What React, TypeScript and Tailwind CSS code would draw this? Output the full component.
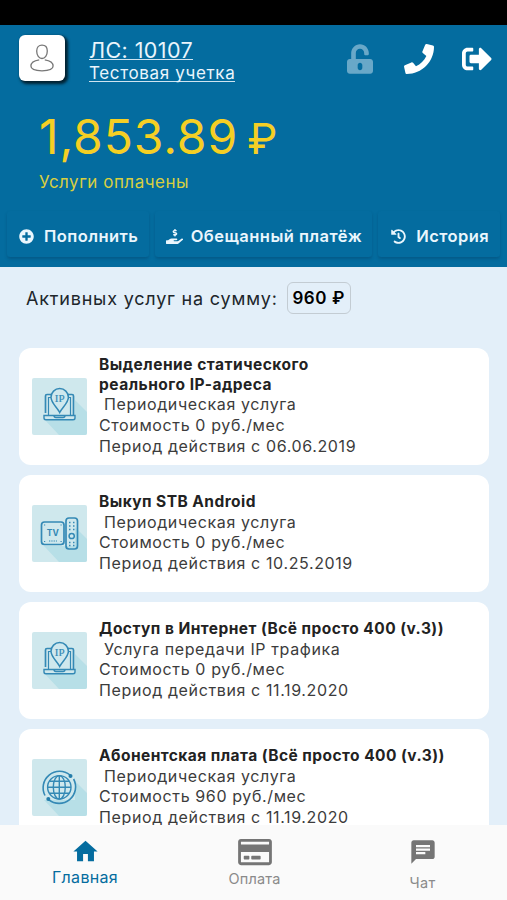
import { FaUnlockAlt, FaPhone, FaSignOutAlt, FaPlusCircle, FaHandHoldingUsd, FaHistory, FaRegCreditCard } from "react-icons/fa";
import { MdHome, MdChat } from "react-icons/md";

const services = [
  {
    icon: "ip",
    title: "Выделение статического реального IP-адреса",
    type: "Периодическая услуга",
    price: "Стоимость 0 руб./мес",
    period: "Период действия с 06.06.2019",
  },
  {
    icon: "tv",
    title: "Выкуп STB Android",
    type: "Периодическая услуга",
    price: "Стоимость 0 руб./мес",
    period: "Период действия с 10.25.2019",
  },
  {
    icon: "ip",
    title: "Доступ в Интернет (Всё просто 400 (v.3))",
    type: "Услуга передачи IP трафика",
    price: "Стоимость 0 руб./мес",
    period: "Период действия с 11.19.2020",
  },
  {
    icon: "globe",
    title: "Абонентская плата (Всё просто 400 (v.3))",
    type: "Периодическая услуга",
    price: "Стоимость 960 руб./мес",
    period: "Период действия с 11.19.2020",
  },
];

function UserIcon() {
  return (
    <svg width="24" height="28" viewBox="0 0 24 28" fill="none" stroke="#777" strokeWidth="1.3">
      <path d="M12 1.200c3.200 0 5.300 2.200 5.300 5.800 0 4.200-2.300 7.500-5.300 7.500s-5.300-3.300-5.300-7.500c0-3.600 2.100-5.800 5.300-5.800Z" />
      <path d="M9.200 15.800C4 16.500 .900 18.600 .900 22.100c0 3 4.400 4.700 11.100 4.700s11.100-1.700 11.100-4.700c0-3.500-3.100-5.600-8.300-6.300" />
    </svg>
  );
}

function IpArt() {
  return (
    <g>
      <path d="M13.500 35V18q0-1.500 1.500-1.500h4.500M36 16.500h4q1.500 0 1.500 1.500V37" strokeWidth="1.700" />
      <path d="M16.500 37V19.500h2.500M36.500 19.500H38.500V37" strokeWidth="1.200" />
      <path d="M12 37.500h31v2.500q0 1.800-2 1.800H14q-2 0-2-1.800ZM22 37.500q0 2 2 2h7q2 0 2-2" strokeWidth="1.400" />
      <path d="M27.700 34.500C25 29 19 25 19 19.300a8.700 8.700 0 0 1 17.400 0c0 5.700-6 9.700-8.700 15.200Z" fill="#cfe8ee" strokeWidth="1.500" />
      <text x="27.700" y="24" textAnchor="middle" fontSize="11" fontFamily="Liberation Serif, serif" fill="#3489b5" stroke="#3489b5" strokeWidth="0.200">IP</text>
    </g>
  );
}

function TvArt() {
  return (
    <g>
      <rect x="9.500" y="17" width="22.500" height="22.500" rx="3" strokeWidth="1.700" />
      <rect x="34" y="13" width="11.500" height="31" rx="3" strokeWidth="1.700" />
      <path d="M17 36h8" strokeWidth="1.200" strokeDasharray="1.300 1" />
      <path d="M12 20h1.200M28.500 20h1.200M12 36.500h1.200M28.500 36.500h1.200" strokeWidth="1.200" />
      <circle cx="39.700" cy="31" r="2.600" strokeWidth="1.500" />
      <path d="M37 17.500h1.500M41 17.500h1.500M37 21h1.500M41 21h1.500M37 24.500h1.500M41 24.500h1.500M37 37.500h1.500M41 37.500h1.500M37 40.500h1.500M41 40.500h1.500" strokeWidth="1.400" />
      <text x="20.800" y="31" textAnchor="middle" fontSize="8.500" fontWeight="700" fontFamily="Inter, sans-serif" fill="#3489b5" stroke="none">TV</text>
    </g>
  );
}

function GlobeArt() {
  return (
    <g strokeWidth="1.400">
      <circle cx="27.300" cy="28.300" r="11.700" />
      <ellipse cx="27.300" cy="28.300" rx="6" ry="11.700" />
      <path d="M27.300 16.600v23.400M15.600 28.300h23.400M17.500 22.300h19.600M17.500 34.300h19.600" />
      <path d="M13 36.500A16.500 16.500 0 0 1 38 16M41.600 20A16.500 16.500 0 0 1 16.600 40.600" strokeWidth="1.600" />
      <circle cx="38.500" cy="17" r="2" fill="#237daa" stroke="none" />
      <circle cx="16.300" cy="40" r="2" fill="#237daa" stroke="none" />
    </g>
  );
}

function ServiceIcon({ name }: { name: string }) {
  return (
    <svg width="55" height="57" viewBox="0 0 55 57" fill="none" stroke="#3489b5" className="shrink-0 rounded-[2px] bg-[#cfe8ed]">
      <path d="M43 22 55 34v23H27L12 41h31Z" fill="#b7dfe7" stroke="none" />
      {name === "ip" && <IpArt />}
      {name === "tv" && <TvArt />}
      {name === "globe" && <GlobeArt />}
    </svg>
  );
}

function Header() {
  return (
    <header className="flex h-[242px] shrink-0 flex-col bg-[#046c9f] text-white">
      <div className="flex h-[72px] items-start pl-[19px] pr-[15px] pt-[10px]">
        <div className="flex h-[46px] w-[46px] items-center justify-center rounded-[6px] bg-white shadow-[2px_2px_3px_1px_rgba(0,0,0,0.7)]">
          <UserIcon />
        </div>
        <div className="ml-6 flex flex-col items-start whitespace-nowrap text-[#eaf5fc]">
          <span className="mt-[2px] h-[23px] border-b border-[#cfe4f0] text-[21.500px] leading-[26px] tracking-[0.400px]">ЛС: 10107</span>
          <span className="h-[22px] border-b border-[#cfe4f0] text-[17px] leading-[26px] tracking-[0.650px]">Тестовая учетка</span>
        </div>
        <div className="ml-auto flex items-center pt-[9px]">
          <FaUnlockAlt className="h-[30px] w-[26px] text-[#69a8c8]" />
          <FaPhone className="ml-[31px] h-[30px] w-[30px]" />
          <FaSignOutAlt className="ml-[28px] h-[30px] w-[30px]" />
        </div>
      </div>
      <div className="h-[114px] pl-[39px] text-[#f5cf24]">
        <div className="whitespace-nowrap pt-[14px] text-[48px] leading-[52px] tracking-[0.900px]">
          1,853.89<span className="ml-[9px] text-[43px]">₽</span>
        </div>
        <div className="mt-[7px] text-[17px] leading-[22px] tracking-[0.500px] text-[#d9cf3f]">Услуги оплачены</div>
      </div>
      <div className="flex gap-[6px] px-[7px] text-[16.500px] font-semibold tracking-[0.450px] text-[#eaf6fd]">
        <button className="flex h-[46px] w-[142px] items-center whitespace-nowrap rounded-[3px] pl-3 pt-[4px] shadow-[0_2px_3px_rgba(0,40,70,0.25)]">
          <FaPlusCircle className="mr-[10px] h-[15px] w-[15px] shrink-0" />
          Пополнить
        </button>
        <button className="flex h-[46px] w-[218px] items-center whitespace-nowrap rounded-[3px] pl-[11px] pt-[4px] shadow-[0_2px_3px_rgba(0,40,70,0.25)]">
          <FaHandHoldingUsd className="mr-[8px] h-[17px] w-[17px] shrink-0" />
          Обещанный платёж
        </button>
        <button className="flex h-[46px] w-[122px] items-center whitespace-nowrap rounded-[3px] pl-[13px] pt-[4px] shadow-[0_2px_3px_rgba(0,40,70,0.25)]">
          <FaHistory className="mr-[10px] h-[15px] w-[15px] shrink-0" />
          История
        </button>
      </div>
    </header>
  );
}

function BottomNav() {
  return (
    <nav className="grid h-[75px] shrink-0 grid-cols-3 bg-[#fafafa] text-[#757575]">
      <div className="flex flex-col items-center pl-[1px] pt-[12px] text-[#046c9f]">
        <MdHome className="h-[29px] w-[29px]" />
        <span className="text-[16px] leading-[22px] tracking-[0.300px]">Главная</span>
      </div>
      <div className="flex flex-col items-center pl-[2px] pt-[12px]">
        <FaRegCreditCard className="h-[30px] w-[34px]" />
        <span className="text-[14.500px] leading-[24px] tracking-[0.200px] text-[#8a8a8a]">Оплата</span>
      </div>
      <div className="flex flex-col items-center pt-[13px]">
        <MdChat className="h-[28px] w-[28px]" />
        <span className="mt-[5px] text-[14.500px] leading-[24px] tracking-[0.300px] text-[#8a8a8a]">Чат</span>
      </div>
    </nav>
  );
}

export default function App() {
  return (
    <div className="flex h-[900px] w-[507px] flex-col overflow-hidden bg-[#e3eff9] font-['Inter','Liberation_Sans',sans-serif]">
      <div className="h-[25px] shrink-0 bg-black" />
      <Header />
      <main className="min-h-0 flex-1 overflow-hidden px-[19px] pt-[15px]">
        <div className="flex h-8 items-center pl-[7px] text-[18px] tracking-[0.800px] text-[#20262b]">
          <span className="whitespace-nowrap">Активных услуг на сумму:</span>
          <span className="ml-[9px] flex h-8 w-[64px] items-center justify-center whitespace-nowrap rounded-[6px] border border-[#c3ccd3] pt-[2px] text-[17px] font-semibold tracking-[0.600px] text-black">960 ₽</span>
        </div>
        <div className="mt-[34px] flex flex-col gap-[10px]">
          {services.map((s, i) => (
            <div key={i} className="flex h-[117px] w-[470px] shrink-0 items-center rounded-[12px] bg-white pl-[13px]">
              <ServiceIcon name={s.icon} />
              <div className="ml-3 w-[360px] pb-[1px] text-[16px] leading-[20.700px] tracking-[0.620px] text-[#3c3c3c]">
                <div className={i === 0 ? "w-[240px] text-[15.500px] font-bold leading-[19.500px] tracking-[0.500px] text-[#222]" : "whitespace-nowrap text-[15.500px] font-bold leading-[19.500px] tracking-[0.450px] text-[#222]"}>{s.title}</div>
                <div className="pl-[5px]">{s.type}</div>
                <div>{s.price}</div>
                <div>{s.period}</div>
              </div>
            </div>
          ))}
        </div>
      </main>
      <BottomNav />
    </div>
  );
}
